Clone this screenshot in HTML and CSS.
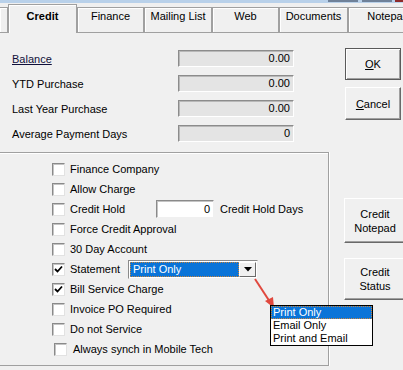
FILE: index.html
```html
<!DOCTYPE html>
<html lang="en">
<head>
    <meta charset="UTF-8">
    <meta name="viewport" content="width=device-width, initial-scale=1.0">
    <title>Customer Credit</title>
    <link rel="stylesheet" href="styles.css">
</head>
<body>
    <div class="window">
        <div class="caption">
            <span class="cap-btn"></span>
            <span class="cap-btn"></span>
            <span class="cap-close"></span>
        </div>
        <div class="tabs">
            <div class="tab tab-cut"></div>
            <div class="tab active" style="width: 69px">Credit</div>
            <div class="tab" style="width: 67px">Finance</div>
            <div class="tab" style="width: 68px">Mailing List</div>
            <div class="tab" style="width: 67px">Web</div>
            <div class="tab" style="width: 69px">Documents</div>
            <div class="tab" style="width: 80px">Notepad</div>
        </div>
        <div class="page">
            <div class="main">
                <div class="fields">
                    <div class="field">
                        <span class="field-label link">Balance</span>
                        <span class="readout">0.00</span>
                    </div>
                    <div class="field">
                        <span class="field-label">YTD Purchase</span>
                        <span class="readout">0.00</span>
                    </div>
                    <div class="field">
                        <span class="field-label">Last Year Purchase</span>
                        <span class="readout">0.00</span>
                    </div>
                    <div class="field">
                        <span class="field-label">Average Payment Days</span>
                        <span class="readout">0</span>
                    </div>
                </div>
                <div class="options">
                    <div class="opt"><span class="check"></span>Finance Company</div>
                    <div class="opt"><span class="check"></span>Allow Charge</div>
                    <div class="opt">
                        <span class="check"></span>
                        <span class="hold-label">Credit Hold</span>
                        <span class="entry">0</span>
                        <span class="after">Credit Hold Days</span>
                    </div>
                    <div class="opt"><span class="check"></span>Force Credit Approval</div>
                    <div class="opt"><span class="check"></span>30 Day Account</div>
                    <div class="opt">
                        <span class="check checked">
                            <svg width="9" height="9" viewBox="0 0 9 9"><path d="M1 4 L3.5 6.5 L8 1.5" fill="none" stroke="#000" stroke-width="1.8"/></svg>
                        </span>
                        <span class="stmt-label">Statement</span>
                        <span class="combo">
                            <span class="combo-value">Print Only</span>
                            <span class="combo-btn">
                                <svg width="8" height="5" viewBox="0 0 8 5"><path d="M0 0 H8 L4 4.5 Z" fill="#000"/></svg>
                            </span>
                        </span>
                    </div>
                    <div class="opt">
                        <span class="check checked">
                            <svg width="9" height="9" viewBox="0 0 9 9"><path d="M1 4 L3.5 6.5 L8 1.5" fill="none" stroke="#000" stroke-width="1.8"/></svg>
                        </span>
                        Bill Service Charge
                    </div>
                    <div class="opt"><span class="check"></span>Invoice PO Required</div>
                    <div class="opt"><span class="check"></span>Do not Service</div>
                    <div class="opt opt-mobile"><span class="check"></span>Always synch in Mobile Tech</div>
                </div>
            </div>
            <div class="side">
                <button class="btn btn-default btn-ok"><u>O</u>K</button>
                <button class="btn btn-cancel"><u>C</u>ancel</button>
                <button class="btn btn-notepad">Credit<br>Notepad</button>
                <button class="btn btn-status">Credit<br>Status</button>
            </div>
        </div>

        <svg class="pointer" width="30" height="36" viewBox="0 0 30 36">
            <line x1="4" y1="2" x2="19" y2="25" stroke="#e0483e" stroke-width="2"/>
            <path d="M23 31 L14 24 L22 20 Z" fill="#e0483e"/>
        </svg>

        <div class="droplist">
            <div class="drop-item selected">Print Only</div>
            <div class="drop-item">Email Only</div>
            <div class="drop-item">Print and Email</div>
        </div>
    </div>
</body>
</html>
```

FILE: styles.css
```css
body {
    margin: 0;
    background: #f0f0f0;
}
.window {
    position: relative;
    width: 403px;
    height: 370px;
    overflow: hidden;
    background: #f0f0f0;
    font-family: "Liberation Sans", Arial, sans-serif;
    font-size: 11px;
    color: #000;
}
.caption {
    height: 3px;
    background: #b9d1ea;
    display: flex;
    justify-content: flex-end;
}
.cap-btn {
    width: 30px;
    height: 2px;
    margin-left: 4px;
    background: #6f8199;
}
.cap-close {
    width: 8px;
    height: 2px;
    margin-left: 3px;
    background: #8e2b2b;
}

/* tab strip */
.tabs {
    display: flex;
    align-items: flex-end;
    height: 29px;
    border-bottom: 1px solid #a0a0a0;
}
.tab {
    flex-shrink: 0;
    box-sizing: border-box;
    height: 25px;
    padding-top: 1px;
    line-height: 14px;
    text-align: center;
    border: 1px solid #a0a0a0;
    border-bottom: none;
    box-shadow: inset 1px 1px 0 #ffffff;
    background: #f0f0f0;
    white-space: nowrap;
}
.tab-cut {
    width: 8px;
    border-left: none;
}
.tab.active {
    height: 29px;
    margin-bottom: -1px;
    padding-top: 4px;
    font-weight: bold;
}

.page {
    display: flex;
}
.main {
    width: 329px;
    flex-shrink: 0;
}

/* read-only totals */
.fields {
    padding: 13px 0 0 12px;
}
.field {
    display: flex;
    align-items: center;
    height: 25px;
}
.field-label {
    width: 166px;
}
.link {
    text-decoration: underline;
    color: #10103a;
}
.readout {
    box-sizing: border-box;
    width: 116px;
    height: 17px;
    padding-right: 3px;
    line-height: 15px;
    text-align: right;
    background: #e4e4e4;
    border: 1px solid;
    border-color: #8c8c8c #ffffff #ffffff #8c8c8c;
    box-shadow: inset 1px 1px 0 #b8b8b8;
}

/* option group */
.options {
    box-sizing: border-box;
    height: 214px;
    margin-top: 6px;
    padding-top: 6px;
    border-top: 1px solid #a0a0a0;
    border-right: 1px solid #a0a0a0;
    border-bottom: 1px solid #a0a0a0;
    box-shadow: inset 0 1px 0 #ffffff, 1px 0 0 #ffffff;
}
.opt {
    display: flex;
    align-items: center;
    height: 20px;
    padding-left: 52px;
    white-space: nowrap;
}
.opt-mobile {
    padding-left: 54px;
}
.check {
    box-sizing: border-box;
    width: 13px;
    height: 13px;
    margin-right: 5px;
    display: flex;
    align-items: center;
    justify-content: center;
    background: #ffffff;
    border: 1px solid;
    border-color: #8a8a8a #e2e2e2 #e2e2e2 #8a8a8a;
    box-shadow: inset 1px 1px 0 #c4c4c4;
}
.opt-mobile .check {
    margin-right: 6px;
}
.hold-label {
    width: 86px;
}
.entry {
    box-sizing: border-box;
    width: 58px;
    height: 18px;
    padding-right: 3px;
    line-height: 16px;
    text-align: right;
    background: #ffffff;
    border: 1px solid;
    border-color: #8a8a8a #f0f0f0 #f0f0f0 #8a8a8a;
    box-shadow: inset 1px 1px 0 #c4c4c4;
}
.after {
    margin-left: 6px;
}
.stmt-label {
    width: 58px;
}
.combo {
    box-sizing: border-box;
    display: flex;
    width: 130px;
    height: 19px;
    padding: 1px;
    background: #ffffff;
    border: 1px solid;
    border-color: #8a8a8a #f0f0f0 #f0f0f0 #8a8a8a;
}
.combo-value {
    flex: 1;
    box-sizing: border-box;
    padding-left: 2px;
    line-height: 13px;
    color: #ffffff;
    background: #0a74d8;
    border: 1px dotted #c8843c;
}
.combo-btn {
    box-sizing: border-box;
    width: 17px;
    display: flex;
    align-items: center;
    justify-content: center;
    background: #f0f0f0;
    border: 1px solid;
    border-color: #ffffff #6a6a6a #6a6a6a #ffffff;
}

/* side buttons */
.side {
    display: flex;
    flex-direction: column;
    padding: 15px 0 0 15px;
}
.btn {
    box-sizing: border-box;
    padding: 0;
    font-family: inherit;
    font-size: 11px;
    line-height: 14px;
    color: #000;
    background: #f0f0f0;
    border: 1px solid;
    border-color: #ffffff #696969 #696969 #ffffff;
    box-shadow: inset -1px -1px 0 #a0a0a0;
}
.btn-default {
    border-color: #5a5a5a;
    box-shadow: inset 1px 1px 0 #ffffff, inset -1px -1px 0 #a0a0a0;
}
.btn-ok {
    width: 56px;
    height: 32px;
    margin-left: 1px;
}
.btn-cancel {
    width: 56px;
    height: 33px;
    margin: 7px 0 0 1px;
}
.btn-notepad {
    width: 62px;
    height: 45px;
    margin-top: 78px;
}
.btn-status {
    width: 62px;
    height: 42px;
    margin-top: 15px;
}

/* open dropdown and callout arrow */
.pointer {
    position: absolute;
    left: 251px;
    top: 277px;
}
.droplist {
    position: absolute;
    left: 270px;
    top: 305px;
    box-sizing: border-box;
    width: 103px;
    height: 41px;
    background: #ffffff;
    border: 1px solid #000;
}
.drop-item {
    box-sizing: border-box;
    height: 13px;
    padding-left: 2px;
    line-height: 13px;
    white-space: nowrap;
}
.drop-item.selected {
    color: #ffffff;
    background: #0a74d8;
    border: 1px dotted #c8843c;
    line-height: 11px;
    padding-left: 1px;
}
```
